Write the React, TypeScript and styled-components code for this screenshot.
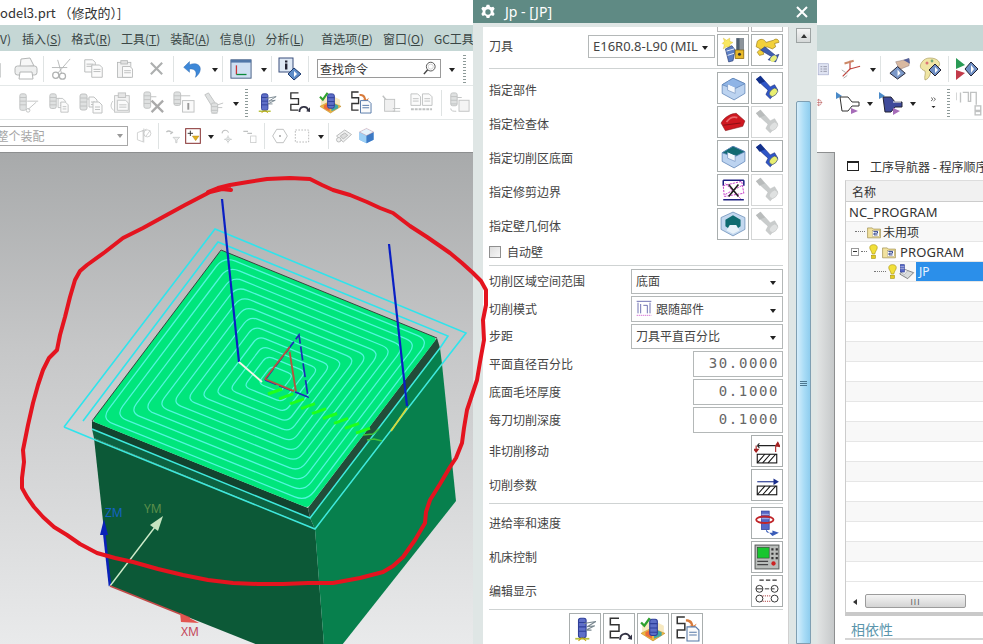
import React from "react";
import styled, { createGlobalStyle } from "styled-components";

const CJK = `"Noto Sans CJK SC", "Noto Sans", sans-serif`;

const Global = createGlobalStyle`
  html, body { margin: 0; padding: 0; background: #fff; overflow: hidden; }
  body { font-family: ${CJK}; }
`;

const Page = styled.div`
  position: relative;
  width: 983px;
  height: 644px;
  overflow: hidden;
  display: flex;
  flex-direction: column;
  background: #fff;
  color: #444;
  font-size: 12px;
`;
const TitleBar = styled.div`
  height: 25px;
  flex: none;
  display: flex;
  align-items: center;
  font-size: 13px;
  color: #333;
  white-space: pre;
`;
const MenuBar = styled.div`
  height: 26px;
  flex: none;
  background: #c5d7d5;
  display: flex;
  align-items: center;
  gap: 10px;
  margin-bottom: 1px;
  color: #3a4645;
  white-space: nowrap;
  overflow: hidden;
`;
const MenuItem = styled.span<{ $ml?: number }>`
  margin-left: ${(p) => p.$ml ?? 0}px;
  flex: none;
`;
const ToolRow = styled.div<{ $h: number; $line: string }>`
  height: ${(p) => p.$h}px;
  flex: none;
  box-sizing: border-box;
  border-bottom: 1px solid ${(p) => p.$line};
  display: flex;
  align-items: center;
  overflow: hidden;
`;
const ToolSlot = styled.span<{ $ml: number; $w: number }>`
  flex: none;
  margin-left: ${(p) => p.$ml}px;
  width: ${(p) => p.$w}px;
  display: flex;
  align-items: center;
  justify-content: center;
`;
const Sep = styled.span`
  width: 1px;
  height: 26px;
  background: #dfe3e3;
`;
const Grip = styled.span`
  width: 3px;
  height: 28px;
  background: repeating-linear-gradient(to bottom, #8d9a98 0 1px, #fff 1px 3px);
`;
const Drop = styled.span`
  width: 0;
  height: 0;
  border-left: 3.5px solid transparent;
  border-right: 3.5px solid transparent;
  border-top: 4px solid #222;
  margin-top: 3px;
`;
const SearchBox = styled.span`
  width: 124px;
  height: 19px;
  box-sizing: border-box;
  border: 1px solid #9a9a9a;
  padding: 0 3px 0 2px;
  display: flex;
  align-items: center;
  justify-content: space-between;
  color: #333;
`;
const AsmSelect = styled.span`
  width: 138px;
  height: 20px;
  box-sizing: border-box;
  border: 1px solid #a8a8a8;
  display: flex;
  align-items: center;
  justify-content: space-between;
  padding: 0 4px 0 0;
  color: #a5a5a5;
  overflow: hidden;
`;
const GrayDrop = styled(Drop)`
  border-top-color: #999;
  margin-top: 0;
`;
const Main = styled.div`
  flex: 1;
  min-height: 0;
  display: flex;
`;
const Viewport = styled.div`
  flex: 1;
  background: linear-gradient(to bottom, #a8aaab 0%, #c6c7c8 40%, #e9eaeb 100%);
  border-top: 1px solid #8d8f90;
  overflow: hidden;
`;
const Drawing = styled.svg`
  display: block;
`;
const Strip = styled.div`
  width: 18px;
  flex: none;
  box-sizing: border-box;
  background: linear-gradient(to right, #e2e4e4, #c6c9ca);
  border-right: 1px solid #8d8f90;
  border-top: 1px solid #8d8f90;
`;
const Nav = styled.div`
  width: 148px;
  flex: none;
  display: flex;
  flex-direction: column;
  background: #fff;
  padding-left: 10px;
  box-sizing: border-box;
`;
const NavHead = styled.div`
  height: 28px;
  flex: none;
  display: flex;
  align-items: center;
  gap: 11px;
  padding-left: 2px;
  white-space: nowrap;
  overflow: hidden;
  color: #333;
`;
const Square = styled.span`
  width: 12px;
  height: 10px;
  flex: none;
  box-sizing: border-box;
  border: 1px solid #222;
  border-top-width: 2px;
`;
const NavBox = styled.div`
  height: 436px;
  flex: none;
  box-sizing: border-box;
  border-left: 1px solid #ccc;
  border-top: 1px solid #ddd;
  border-bottom: 4px solid #c9c9c9;
  display: flex;
  flex-direction: column;
  overflow: hidden;
`;
const NavCol = styled.div`
  height: 21px;
  flex: none;
  box-sizing: border-box;
  background: #f1f1f1;
  border-bottom: 1px solid #ccc;
  padding-left: 6px;
  display: flex;
  align-items: center;
  color: #333;
`;
const TreeRow = styled.div<{ $odd: boolean; $pl: number }>`
  height: 20px;
  flex: none;
  box-sizing: border-box;
  background: ${(p) => (p.$odd ? "#f8f8f8" : "#fff")};
  border-bottom: 1px solid #e6e6e6;
  padding-left: ${(p) => p.$pl}px;
  display: flex;
  align-items: center;
  gap: 2px;
  white-space: nowrap;
  color: #333;
`;
const NavText = styled.span<{ $ml?: number }>`
  margin-left: ${(p) => p.$ml ?? 0}px;
  font-family: "Noto Sans", sans-serif;
  font-size: 13px;
  letter-spacing: 0.1px;
`;
const Selected = styled.span`
  flex: 1;
  align-self: stretch;
  background: #2b8fea;
  color: #e8f3ff;
  margin-left: -1px;
  padding-left: 3px;
  display: flex;
  align-items: center;
  font-size: 12px;
  font-family: "Noto Sans", sans-serif;
`;
const Dots = styled.span<{ $w: number }>`
  width: ${(p) => p.$w}px;
  flex: none;
  border-top: 1px dotted #777;
`;
const Expander = styled.span`
  width: 8px;
  height: 8px;
  flex: none;
  box-sizing: border-box;
  border: 1px solid #999;
  position: relative;
  &::after {
    content: "";
    position: absolute;
    left: 1px;
    right: 1px;
    top: 2px;
    height: 1px;
    background: #333;
  }
`;
const BulbSvg = styled.svg<{ $mr?: number }>`
  display: block;
  flex: none;
  margin-right: ${(p) => p.$mr ?? 0}px;
`;
const HScroll = styled.div`
  flex: 1;
  display: flex;
  align-items: flex-end;
  padding: 0 0 4px 7px;
  gap: 8px;
  background: #fff;
`;
const LeftArrow = styled.span`
  width: 0;
  height: 0;
  margin-bottom: 3px;
  border-top: 3.5px solid transparent;
  border-bottom: 3.5px solid transparent;
  border-right: 4px solid #333;
`;
const HThumb = styled.span`
  width: 101px;
  height: 14px;
  box-sizing: border-box;
  border: 1px solid #9c9c9c;
  border-radius: 2px;
  background: linear-gradient(to bottom, #f4f4f4, #d4d4d4);
  display: flex;
  align-items: center;
  justify-content: center;
  color: #555;
  font-size: 8px;
  letter-spacing: 1px;
`;
const NavFoot = styled.div`
  height: 24px;
  flex: none;
  box-sizing: border-box;
  border-bottom: 2px solid #d5d5d5;
  padding: 4px 0 0 6px;
  color: #5b96ac;
  font-size: 14px;
  display: flex;
  align-items: center;
`;

/* dialog */
const Dialog = styled.div`
  position: absolute;
  left: 473px;
  top: 0;
  width: 344px;
  height: 644px;
  display: flex;
  flex-direction: column;
  background: #e6ebea;
  z-index: 2;
`;
const DialogTitle = styled.div`
  height: 23px;
  flex: none;
  background: #5f8a84;
  color: #fff;
  display: flex;
  align-items: center;
  padding: 0 9px 0 7px;
  gap: 9px;
  font-family: "Noto Sans", sans-serif;
  font-size: 14px;
`;
const CloseX = styled.svg`
  margin-left: auto;
`;
const DialogBody = styled.div`
  flex: 1;
  min-height: 0;
  display: flex;
  padding: 4px 0 0 10px;
  background: #dfe6e5;
`;
const Content = styled.div`
  width: 306px;
  flex: none;
  box-sizing: border-box;
  background: #fff;
  border-right: 1px solid #d0d0d0;
  padding: 0 5px 0 6px;
  display: flex;
  flex-direction: column;
  overflow: hidden;
`;
const ClippedRow = styled.div`
  height: 5px;
  flex: none;
  margin-bottom: 2px;
  display: flex;
  justify-content: flex-end;
  align-items: flex-end;
  gap: 2px;
`;
const Stub = styled.span`
  width: 32px;
  height: 5px;
  box-sizing: border-box;
  border: 1px solid #b9b9b9;
  border-top: none;
`;
const Row = styled.div<{ $h?: number; $mb?: number; $top?: boolean }>`
  height: ${(p) => p.$h ?? 32}px;
  margin-bottom: ${(p) => p.$mb ?? 2}px;
  flex: none;
  display: flex;
  align-items: ${(p) => (p.$top ? "flex-start" : "center")};
  gap: 2px;
  white-space: nowrap;
`;
const Label = styled.span<{ $pt?: number }>`
  flex: 1;
  color: #444;
  padding-top: ${(p) => p.$pt ?? 0}px;
  padding-bottom: ${(p) => (p.$pt ? 0 : 2)}px;
`;
const IconBtn = styled.span<{ $dim?: boolean }>`
  width: 32px;
  height: 32px;
  flex: none;
  box-sizing: border-box;
  border: 1px solid ${(p) => (p.$dim ? "#d4d6d6" : "#a9aeae")};
  display: flex;
  align-items: center;
  justify-content: center;
  background: #fff;
`;
const Combo = styled.span<{ $w: number; $latin?: boolean; $h?: number }>`
  width: ${(p) => p.$w}px;
  height: ${(p) => (p.$h ? `${p.$h}px` : "100%")};
  margin-top: ${(p) => (p.$h ? "1px" : "0")};
  flex: none;
  box-sizing: border-box;
  border: 1px solid #b4b8b8;
  display: flex;
  align-items: center;
  justify-content: space-between;
  gap: 3px;
  padding: 0 6px 0 4px;
  color: #444;
  font-family: ${(p) => (p.$latin ? `"Noto Sans", sans-serif` : CJK)};
  font-size: ${(p) => (p.$latin ? 13 : 12)}px;
`;
const ComboText = styled.span`
  display: flex;
  align-items: center;
  gap: 4px;
  overflow: hidden;
  padding-bottom: 2px;
`;
const NumInput = styled.span`
  width: 90px;
  height: 100%;
  flex: none;
  box-sizing: border-box;
  border: 1px solid #b4b8b8;
  display: flex;
  align-items: center;
  justify-content: flex-end;
  padding: 0 3px 2px 0;
  font-family: "DejaVu Sans Mono", monospace;
  font-size: 14px;
  letter-spacing: 1.6px;
  color: #666;
`;
const Divider = styled.div<{ $mb: number }>`
  height: 1px;
  flex: none;
  background: #cfd3d3;
  margin-bottom: ${(p) => p.$mb}px;
`;
const CheckBox = styled.span`
  width: 12px;
  height: 12px;
  flex: none;
  box-sizing: border-box;
  border: 1px solid #8f8f8f;
  background: linear-gradient(135deg, #ddd, #f6f6f6);
  margin-right: 4px;
`;
const CenterRow = styled.div`
  display: flex;
  gap: 2px;
  padding-left: 80px;
`;
const VScroll = styled.div`
  flex: 1;
  display: flex;
  flex-direction: column;
  align-items: center;
  padding: 1px 0 0 1px;
  width: 27px;
`;
const ScrollBtn = styled.span`
  width: 15px;
  height: 15px;
  flex: none;
  box-sizing: border-box;
  border: 1px solid #9da3a3;
  background: linear-gradient(#f5f5f5, #d5d8d8);
  display: flex;
  align-items: center;
  justify-content: center;
  margin-bottom: 58px;
  &::before {
    content: "";
    border-left: 3px solid transparent;
    border-right: 3px solid transparent;
    border-bottom: 4px solid #333;
  }
`;
const ScrollThumb = styled.span`
  width: 15px;
  flex: 1;
  box-sizing: border-box;
  border: 1px solid #7f9fb2;
  border-radius: 2px 2px 0 0;
  background: linear-gradient(to right, #d6eefb, #a9dcf6 55%, #8fcdee);
  position: relative;
  &::after {
    content: "";
    position: absolute;
    top: 279px;
    left: 3px;
    width: 7px;
    height: 6px;
    background: repeating-linear-gradient(to bottom, #4d7790 0 1px, transparent 1px 2px);
  }
`;
const Annotation = styled.svg`
  position: absolute;
  left: 0;
  top: 0;
  z-index: 3;
  pointer-events: none;
`;

/* ----- icons (viewBox 24) ----- */
const C = "#c0c2c2";
const D = "#dfe1e1";
const cyl = (x: number, y: number, h: number, f = D, s = C) => (
  <g>
    <rect x={x} y={y} width="7" height={h} rx="2" fill={f} stroke={s} />
    <path d={`M${x} ${y + 4}h7M${x} ${y + 8}h7M${x} ${y + 12}h7`} stroke={s} />
  </g>
);
const doc = (x: number, y: number, w = 9, h = 11, s = C) => (
  <g>
    <path d={`M${x} ${y}h${w - 3}l3 3v${h - 3}h-${w}z`} fill="#fbfbfb" stroke={s} />
    <path d={`M${x + 2} ${y + 5}h${w - 4}M${x + 2} ${y + 7.5}h${w - 4}`} stroke={s} />
  </g>
);
const fanLines = (s: string) => <path d="M11 7 22 5 14 10 21 9 13 13 18 13" fill="none" stroke={s} />;
const flash = (body: string, dark: string, lens: string, stroke: string) => (
  <g>
    <path d="M2 4 6 1 15 11 19 9 22 14 15 22 11 18 13 14z" fill={body} stroke={stroke} strokeWidth=".6" />
    <path d="M2 4 6 1 10 6 5 8z" fill={dark} />
    <ellipse cx="18" cy="16" rx="3" ry="4.4" transform="rotate(45 18 16)" fill={lens} stroke={stroke} strokeWidth=".5" />
  </g>
);
const block = (top: string, side: string) => (
  <g stroke="#5f84b6" strokeWidth=".7">
    <path d="M2 9 12 3 23 8 23 17 13 23 2 17z" fill={side} />
    <path d="M2 9 12 3 23 8 13 13z" fill={top} />
    <path d="M7 8 14 11 14 17 7 14z" fill="#f4f8fd" stroke="#7c9ac6" />
    <path d="M7 7 14 10" stroke={top} strokeWidth="3" />
  </g>
);

const icons: Record<string, React.ReactNode> = {
  doc: <g>{doc(4, 3, 16, 18)}<rect x="0" y="8" width="2" height="10" fill={C} /></g>,
  printer: (
    <g stroke="#b4b6b6" fill="#eeefef">
      <path d="M7 2 16 1 20 9 6 10z" fill="#f7f7f7" />
      <rect x="1" y="9" width="22" height="9" rx="2.5" />
      <path d="M6 15h12l1 7H5z" fill="#fff" />
    </g>
  ),
  scissors: (
    <g fill="none" stroke="#b0b2b2" strokeWidth="1.3">
      <circle cx="6" cy="19" r="3.2" />
      <circle cx="13" cy="20" r="3.2" />
      <path d="M8 17 21 2M12 17 8 3M2 11 18 11" strokeWidth=".9" />
    </g>
  ),
  copy: <g>{doc(2, 2, 12, 14, "#b4b6b6")}{doc(10, 8, 12, 14, "#b4b6b6")}</g>,
  paste: (
    <g stroke="#b4b6b6">
      <rect x="3" y="4" width="16" height="18" fill="#f3f3f3" />
      <rect x="7" y="2" width="8" height="4" fill="#e2e2e2" />
      {doc(9, 9, 12, 13, "#b4b6b6")}
    </g>
  ),
  del: <path d="M4 4 20 20M20 4 4 20" stroke="#adafaf" strokeWidth="3" />,
  undo: (
    <path d="M2 10 9 3 9 7C15 4 22 6 22 12 22 16 19 20 16 22 18 17 17 11 9 12L9 16z" fill="#3d88d8" stroke="#2b67ad" strokeWidth=".5" />
  ),
  csys: (
    <g>
      <rect x="1" y="2" width="22" height="20" fill="#cfe0f2" stroke="#425a80" />
      <rect x="1" y="2" width="22" height="3" fill="#5177a8" />
      <path d="M7 8V18" stroke="#c33" strokeWidth="1.4" />
      <path d="M7 18H18" stroke="#0a8a3a" strokeWidth="1.4" />
    </g>
  ),
  infoDia: (
    <g>
      <rect x="1" y="1" width="14" height="14" fill="#dfe9f5" stroke="#3a4f7d" />
      <rect x="7" y="3.5" width="2.4" height="2" fill="#223" />
      <rect x="7" y="6.5" width="2.4" height="6" fill="#223" />
      <path d="M16 11 23 17 16 23 10 17z" fill="#5d8cc8" stroke="#1e3a6e" />
      <path d="M16 14 19 17 16 20z" fill="#fff" />
    </g>
  ),
  glass: (
    <g fill="none" stroke="#444">
      <circle cx="14" cy="9" r="7" strokeWidth="1.4" />
      <circle cx="14" cy="9" r="4" stroke="#bbb" />
      <path d="M9 14 3 21" strokeWidth="2.4" />
    </g>
  ),
  gLeft: <g>{cyl(-2, 4, 14)}<path d="M8 14c4-1 4 5 0 5" fill="none" stroke={C} /></g>,
  sScissors: <g>{cyl(2, 2, 18)}<path d="M10 10h12M11 19 20 11" stroke={C} /><circle cx="11" cy="20" r="2" fill="none" stroke={C} /></g>,
  sCopy: <g>{cyl(2, 2, 16)}<path d="M9 7h4" stroke={C} />{doc(11, 7, 8, 10)}{doc(14, 11, 8, 11)}</g>,
  sPaste: <g>{cyl(1, 3, 16)}<path d="M8 8h5" stroke={C} />{doc(10, 6, 8, 10)}{doc(14, 11, 9, 11)}</g>,
  cCopy: <g><rect x="5" y="4" width="16" height="18" fill="#f3f3f3" stroke={C} /><rect x="9" y="1" width="8" height="5" fill="#e5e5e5" stroke={C} />{doc(8, 9, 12, 11)}<path d="M3 10C0 14 1 18 4 20" stroke={C} fill="none" /></g>,
  sDel: <g>{cyl(2, 1, 17)}<path d="M9 6h6" stroke={C} /><path d="M10 10 22 22M22 10 10 22" stroke="#aaa" strokeWidth="2.4" /></g>,
  sInfo: <g>{cyl(2, 1, 14)}<path d="M9 5h10" stroke={C} /><rect x="11" y="10" width="12" height="12" fill="#fafafa" stroke={C} /><rect x="16" y="12.5" width="2" height="7" fill="#999" /></g>,
  sSlant: <g><path d="M2 3 6 1 14 13 10 16z" fill={D} stroke={C} />{cyl(9, 12, 11)}<path d="M16 14 22 12M16 17 21 17" stroke={C} /></g>,
  gen: <g>{cyl(6, 2, 18, "#5f6fc8", "#2f3f99")}{fanLines("#7a8890")}<path d="M3 21h13" stroke="#b7c23c" strokeWidth="1.6" /><path d="M9 20 6 23M10 20 13 23" stroke="#c4a010" /></g>,
  replay: <g fill="none"><path d="M12 2H4V8H12V14H4V20H12" stroke="#333" strokeWidth="1.4" /><path d="M13 22C13 15 21 15 22 20" stroke="#334" strokeWidth="1.8" /><path d="M20 21 24 17 24 22z" fill="#334" /></g>,
  verify: (
    <g>
      <path d="M1 16 11 11 23 16 12 23z" fill="#f0b43c" stroke="#b37b16" strokeWidth=".5" />
      <path d="M2 8 12 4 22 9V17L12 22 2 17z" fill="#e7c04a" opacity=".35" />
      <path d="M5 15 11 12V21L5 18z" fill="#ec6d3a" />
      <path d="M13 12 20 15V18L13 21z" fill="#41a7a2" />
      {cyl(9, 3, 15, "#5d6ec6", "#2f3f99")}
      <path d="M1 6 4 9 9 2" fill="none" stroke="#2fa12f" strokeWidth="2.2" />
    </g>
  ),
  list: <g><path d="M10 1H3V7H10V13H3V20H10" fill="none" stroke="#333" strokeWidth="1.4" /><path d="M11 3C15 3 17 4 18 9L21 7 18 12 14 8 16 9C15 6 13 5 11 5z" fill="#d87a3a" />{doc(12, 10, 11, 13, "#5779a8")}</g>,
  gCheck: <g><path d="M3 4 8 10 8 18" fill="none" stroke={C} strokeWidth="1.6" /><rect x="5" y="8" width="11" height="13" fill="#f0f0f0" stroke={C} /><path d="M14 18h8M14 21h8" stroke={C} /></g>,
  gCompare: <g>{doc(1, 3, 10, 12)}{doc(13, 3, 10, 12)}<path d="M1 19h22" stroke={C} strokeWidth="2" strokeDasharray="3 1" /></g>,
  gMach: <g>{cyl(3, 1, 14)}<path d="M10 6h5" stroke={C} /><rect x="12" y="9" width="11" height="12" fill="#f4f4f4" stroke={C} /><path d="M3 18C3 21 6 21 9 21" fill="none" stroke={C} /></g>,
  gAsm: <g fill="none" stroke={C}><path d="M2 8 10 5 10 21 2 18zM11 2V22M8 6 15 3" /><circle cx="16" cy="9" r="5" /><path d="M14 13 20 5" /></g>,
  gFilter: <g><path d="M2 6C7 2 8 6 11 7M8 9l4-3" stroke={C} fill="none" strokeWidth="2" /><path d="M12 14h10l-4 4v4h-2v-4z" fill="#eee" stroke={C} /></g>,
  redBox: <g><rect x="1" y="1" width="22" height="22" fill="#fff" stroke="#8c3a3a" strokeWidth="1.6" /><path d="M8 4V12M4 8H12" stroke="#222" strokeWidth="1.3" /><path d="M11 12h10l-5 7z" fill="#e0b020" stroke="#a87c10" strokeWidth=".6" /></g>,
  gRot: <g fill="none" stroke={C}><path d="M3 8C4 2 11 2 13 7" strokeWidth="1.6" /><path d="M12 11V23M6 17H18" /><path d="M12 13 16 17 12 21 8 17z" /></g>,
  gParts: <g fill="none" stroke={C} strokeWidth="2"><path d="M2 5h7M8 8h7" /><rect x="13" y="12" width="8" height="10" strokeWidth="1" /></g>,
  hex: <g><path d="M7 2H17L23 12 17 22H7L1 12z" fill="none" stroke="#a2a4a4" /><circle cx="12" cy="12" r="1.4" fill="#999" /></g>,
  dash: <rect x="2" y="3" width="20" height="18" fill="none" stroke="#9a9c9c" strokeDasharray="2.5 2" />,
  gCube: <g fill="#f0f0f0" stroke="#a8aaaa"><path d="M2 12 13 4 22 10 11 20z" /><path d="M7 12 13 8 17 11 11 16z" fill="#ddd" /><circle cx="5" cy="17" r="3" /></g>,
  blueCube: <g><path d="M2 7 12 2 22 7V18L12 23 2 18z" fill="#6fb0ea" /><path d="M2 7 12 12V23L2 18z" fill="#9dd0f5" /><path d="M12 12 22 7V18L12 23z" fill="#3d79c4" /><path d="M2 7 12 2 22 7 12 12z" fill="#e7f3fb" stroke="#d88" strokeWidth=".5" /></g>,
  docBlue: <g><rect x="2" y="3" width="18" height="19" fill="#dfe3f2" stroke="#9fa6c8" /><path d="M6 8h3M11 8h6M6 12h3M11 12h6M6 16h3M11 16h6" stroke="#667" /></g>,
  axes: <g fill="none"><path d="M12 12 12 3M12 12 23 9M12 12 4 20" stroke="#c0443c" strokeWidth="1.3" /><path d="M6 6 16 3" stroke="#c86" strokeWidth="2" /><path d="M3 13 9 17M5 22 9 19" stroke="#aaa" /></g>,
  hand: <g><path d="M8 5 22 2 22 9 12 13z" fill="#d9b9a0" stroke="#877" strokeWidth=".5" /><path d="M16 3 22 1 23 7z" fill="#55609a" /><path d="M10 10 18 17 10 23 2 17z" fill="#7b98c8" stroke="#223" /><path d="M10 13 13 17 10 20z" fill="#fff" /></g>,
  palette: <g><path d="M12 1C20 1 23 6 21 9L13 13C12 20 10 22 7 23 6 19 8 17 7 14 2 12 1 9 4 5 6 2 9 1 12 1z" fill="#f0e6a5" stroke="#a09050" strokeWidth=".6" /><circle cx="9" cy="6" r="1.5" fill="#d77" /><circle cx="14" cy="4" r="1.4" fill="#7a7" /><path d="M17 7 23 13 17 19 11 13z" fill="#6f8fc4" stroke="#223" /><path d="M17 10 20 13 17 16z" fill="#fff" /></g>,
  start: <g><path d="M1 1 10 8 1 12z" fill="#2a9a55" /><path d="M1 13 10 16 1 23z" fill="#c23a4a" /><path d="M16 5 23 12 16 19 10 12z" fill="#6f8fc4" stroke="#223" /><path d="M16 8 19 12 16 16z" fill="#fff" /></g>,
  target: <g fill="none" stroke="#a33"><circle cx="8" cy="12" r="6" /><path d="M0 12H16M8 4V20" /></g>,
  cone: <g><path d="M0 1 6 5 0 8z" fill="#4a8ac8" /><path d="M4 6H12L16 11H23V15H16L12 20H6z" fill="#fff" stroke="#333" /><path d="M15 17 22 20 15 23z" fill="#a66cb8" /></g>,
  coneBlue: <g><path d="M0 1 6 5 0 8z" fill="#4a8ac8" /><path d="M4 6H12L16 11H23V16H16L12 21H6z" fill="#3f4a9a" stroke="#223" /><path d="M14 11H22" stroke="#fff" /><path d="M14 17 21 20 14 24z" fill="#a66cb8" /></g>,
  more: <g fill="none" stroke="#222"><path d="M2 1 6 4.5 2 8M7 1 11 4.5 7 8" strokeWidth="1.3" /><path d="M3 18h8l-4 4z" fill="#222" stroke="none" /></g>,
  gSteps: <g fill="none" stroke={C} strokeWidth="1.2"><path d="M0 3V10M4 3V12M6 3H11V11H13V3H18V14" /><rect x="17" y="15" width="5" height="4" /><rect x="17" y="20" width="5" height="3" /></g>,
  newTool: (
    <g>
      <path d="M2 6 4 4 3 1 6 3 9 1 9 4 12 5 9 7 10 10 6 9 3 11 4 7z" fill="#f8e860" stroke="#c9a820" strokeWidth=".3" />
      <path d="M5 11 11 8 14 12 12 22 8 23z" fill="#5c7fc4" stroke="#24386f" strokeWidth=".6" />
      <path d="M6 13 13 11M7 17 13 15" stroke="#fff" strokeWidth=".8" />
      <rect x="15" y="1" width="7" height="16" fill="#4f5f70" />
      <path d="M18 1h4v16h-4z" fill="#8d949b" />
      <rect x="14" y="12" width="8" height="8" fill="#e8b92a" stroke="#7b5c10" strokeWidth=".6" />
      <circle cx="18" cy="16" r="1.4" fill="#333" />
    </g>
  ),
  wrench: (
    <g>
      <path d="M3 4C6 1 10 2 11 5L18 3C20 1 23 2 23 5L19 6 20 9 17 11 12 9 8 12 9 16 5 17 3 14 6 11 2 9z" fill="#f2d03a" stroke="#98781a" strokeWidth=".6" />
      <path d="M6 12 10 9 20 17 23 16 20 23 13 21 16 18z" fill="#3f5eb0" stroke="#1b2e70" strokeWidth=".5" />
      <ellipse cx="18" cy="20" rx="2.5" ry="3.4" transform="rotate(45 18 20)" fill="#e8ee7a" />
    </g>
  ),
  partBlock: block("#8fb4e6", "#bcd3f0"),
  flashOn: flash("#2f56c8", "#12308a", "#e8ee70", "#1a2f80"),
  flashOff: flash("#c9cccc", "#b9bcbc", "#dfe1e1", "#c0c2c2"),
  redBody: (
    <g>
      <path d="M1 13C4 7 11 4 15 4L23 11 21 16 5 20z" fill="#cf1820" stroke="#7d1216" strokeWidth=".5" />
      <path d="M6 12C9 8 13 7 16 8" fill="none" stroke="#eb6a6e" strokeWidth="1.6" />
      <path d="M3 15 19 13" stroke="#8c1014" strokeWidth="1" />
    </g>
  ),
  floorBlock: block("#116a72", "#bcd3f0"),
  trim: (
    <g fill="none">
      <path d="M3 3H22M3 21H22M3 3V8M22 3V8" stroke="#1c1f80" strokeWidth="1.4" />
      <path d="M3 8 20 4 22 15 4 18zM5 6 19 20M20 8 5 16" stroke="#c33ac6" strokeWidth=".9" strokeDasharray="2 1" />
      <path d="M8 7 17 18M17 7 8 18" stroke="#222" strokeWidth="1.5" />
    </g>
  ),
  wall: (
    <g>
      <path d="M12 1 23 6V17L12 23 1 17V6z" fill="#c3d8ef" stroke="#6d8fb8" strokeWidth=".7" />
      <path d="M12 4 19 8V14L12 19 5 14V8z" fill="#0f6b70" />
      <path d="M9 13 15 13 18 18 12 21 6 18z" fill="#e8f2fa" />
    </g>
  ),
  nonCut: (
    <g>
      <path d="M3 7H20M3 7 5 5M3 7 5 9" fill="none" stroke="#222" strokeWidth="1" />
      <path d="M2 7V13M20 7V13M2 13 0 10.5H4zM20 7 22 4 24 8z" fill="#a32020" stroke="#a32020" />
      <rect x="3" y="15" width="18" height="8" fill="#fff" stroke="#111" />
      <path d="M3 23 10 15M8 23 15 15M13 23 20 15" stroke="#111" />
    </g>
  ),
  cutParam: (
    <g>
      <path d="M3 9H20" stroke="#1b2e8c" strokeWidth="1" />
      <path d="M18 6 23 9 18 12z" fill="#1b2e8c" />
      <rect x="3" y="13" width="18" height="8" fill="#fff" stroke="#111" />
      <path d="M3 21 10 13M8 21 15 13M13 21 20 13" stroke="#111" />
    </g>
  ),
  feed: (
    <g>
      <rect x="7" y="1" width="7" height="17" fill="#5668c8" stroke="#2f3f99" strokeWidth=".7" />
      <path d="M7 4h7M7 8h7M7 12h7" stroke="#b8c2ee" strokeWidth=".8" />
      <ellipse cx="10" cy="9" rx="8" ry="3" fill="none" stroke="#c02428" strokeWidth="1.7" />
      <path d="M11 18C11 22 14 21 17 21V19L23 21 17 24z" fill="#3a5cb8" />
    </g>
  ),
  machine: (
    <g>
      <rect x="1" y="1" width="22" height="22" fill="#b9bdba" stroke="#5c605e" />
      <rect x="3" y="3" width="11" height="10" fill="#17c62f" stroke="#333" strokeWidth=".5" />
      <path d="M16 4h2v2h-2zM20 4h2v2h-2zM16 8h2v2h-2zM20 8h2v2h-2zM16 12h2v2h-2zM20 12h2v2h-2z" fill="#333" />
      <path d="M3 16H13M3 19H13" stroke="#444" />
      <circle cx="18" cy="18" r="2" fill="#c22" />
    </g>
  ),
  editDisp: (
    <g fill="none" stroke="#333" strokeWidth=".9">
      <path d="M5 2H9M11 2H15M17 2H21" strokeWidth="1.1" />
      <circle cx="5" cy="10" r="3.2" /><circle cx="19" cy="10" r="3.2" />
      <path d="M2 10H8M10 10H14M16 10H19" />
      <circle cx="5" cy="19" r="3.2" /><circle cx="19" cy="19" r="3.2" />
      <path d="M8 16.5H16M8 21.5H16" stroke="#a33" strokeDasharray="1 1" />
    </g>
  ),
  folder: (
    <g>
      <path d="M1 5H9L11 7H23V22H1z" fill="#f2e2a0" stroke="#8e7a30" />
      <rect x="9" y="9" width="12" height="11" fill="#fff" stroke="#8e7a30" strokeWidth=".6" />
      <path d="M11 11H18V14H12V17H18" fill="none" stroke="#1a2f80" strokeWidth="1.5" />
    </g>
  ),
  opIcon: (
    <g>
      <path d="M8 8 22 13 13 22 1 15z" fill="#d9dcdc" stroke="#555" />
      <path d="M8 8 13 10 8 16 4 13z" fill="#f5f5f5" stroke="#777" strokeWidth=".6" />
      <rect x="2" y="1" width="6" height="11" fill="#5668c8" stroke="#2f3f99" />
      <path d="M2 4H8M2 7H8" stroke="#ccd" />
    </g>
  ),
  follow: (
    <g fill="none" stroke="#2a2f8e">
      <path d="M1 2H23M3 4V20M7 6V20M11 8H17V20M21 4V20" />
      <path d="M1 23H23" stroke="#c33ac6" strokeDasharray="2 1" />
    </g>
  ),
};

const Icon = ({ n, s = 26 }: { n: string; s?: number }) => (
  <svg width={s} height={s} viewBox="0 0 24 24" style={{ display: "block", flex: "none", overflow: "hidden" }}>
    {icons[n]}
  </svg>
);
const Bulb = ({ mr }: { mr?: number }) => (
  <BulbSvg $mr={mr} width="9" height="15" viewBox="0 0 14 24">
    <path d="M7 1C3 1 1 3 1 6 1 9 4 11 5 16H9C10 11 13 9 13 6 13 3 11 1 7 1z" fill="#f2e03a" stroke="#a89410" />
    <rect x="4" y="18" width="6" height="5" fill="#e6cc20" stroke="#a89410" />
  </BulbSvg>
);

type T = { x: number; w: number; n?: string; el?: React.ReactNode };

const ToolItems = ({ items }: { items: T[] }) => {
  let at = 0;
  return (
    <>
      {items.map((t, i) => {
        const ml = t.x - at;
        at = t.x + t.w;
        return (
          <ToolSlot key={i} $ml={ml} $w={t.w}>
            {t.el ?? <Icon n={t.n!} s={t.w} />}
          </ToolSlot>
        );
      })}
    </>
  );
};
const sep = (x: number): T => ({ x, w: 1, el: <Sep /> });
const drop = (x: number): T => ({ x, w: 7, el: <Drop /> });
const grip = (x: number): T => ({ x, w: 3, el: <Grip /> });

const row1: T[] = [
  { x: -18, w: 22, n: "doc" },
  { x: 14, w: 24, n: "printer" },
  sep(43),
  { x: 50, w: 23, n: "scissors" },
  { x: 83, w: 21, n: "copy" },
  { x: 115, w: 20, n: "paste" },
  { x: 148, w: 17, n: "del" },
  sep(173),
  { x: 182, w: 20, n: "undo" },
  drop(211),
  sep(222),
  { x: 230, w: 22, n: "csys" },
  drop(260),
  sep(271),
  { x: 278, w: 24, n: "infoDia" },
  sep(308),
  {
    x: 317,
    w: 124,
    el: (
      <SearchBox>
        查找命令
        <Icon n="glass" s={15} />
      </SearchBox>
    ),
  },
  drop(448),
  grip(463),
  { x: 817, w: 14, n: "docBlue" },
  { x: 839, w: 22, n: "axes" },
  drop(869),
  sep(880),
  { x: 888, w: 23, n: "hand" },
  { x: 918, w: 24, n: "palette" },
  sep(948),
  { x: 955, w: 24, n: "start" },
];
const row2: T[] = [
  { x: -14, w: 22, n: "gLeft" },
  { x: 18, w: 22, n: "sScissors" },
  { x: 48, w: 22, n: "sCopy" },
  { x: 79, w: 24, n: "sPaste" },
  { x: 110, w: 22, n: "cCopy" },
  { x: 142, w: 23, n: "sDel" },
  { x: 172, w: 23, n: "sInfo" },
  { x: 203, w: 22, n: "sSlant" },
  drop(232),
  grip(245),
  { x: 256, w: 22, n: "gen" },
  { x: 287, w: 23, n: "replay" },
  { x: 319, w: 23, n: "verify" },
  { x: 349, w: 23, n: "list" },
  { x: 380, w: 22, n: "gCheck" },
  { x: 410, w: 23, n: "gCompare" },
  sep(441),
  { x: 448, w: 22, n: "gMach" },
  { x: 815, w: 11, n: "target" },
  { x: 836, w: 24, n: "cone" },
  drop(866),
  { x: 879, w: 24, n: "coneBlue" },
  drop(909),
  { x: 930, w: 12, n: "more" },
  grip(947),
  { x: 956, w: 27, n: "gSteps" },
];
const row3: T[] = [
  {
    x: -10,
    w: 138,
    el: (
      <AsmSelect>
        <span>&nbsp;&nbsp;整个装配</span>
        <GrayDrop />
      </AsmSelect>
    ),
  },
  { x: 136, w: 17, n: "gAsm" },
  sep(158),
  { x: 165, w: 16, n: "gFilter" },
  { x: 185, w: 16, n: "redBox" },
  drop(207),
  { x: 220, w: 16, n: "gRot" },
  { x: 242, w: 16, n: "gParts" },
  sep(264),
  { x: 272, w: 16, n: "hex" },
  { x: 294, w: 16, n: "dash" },
  drop(317),
  sep(328),
  { x: 335, w: 18, n: "gCube" },
  { x: 358, w: 17, n: "blueCube" },
];

/* ----- part drawing ----- */
const FACE: number[][] = [
  [92, 420],
  [221, 249],
  [437, 337],
  [308, 507],
];
const rounded = (pts: number[][], r: number) => {
  const n = pts.length;
  let d = "";
  pts.forEach((p, i) => {
    const a = pts[(i + n - 1) % n];
    const b = pts[(i + 1) % n];
    const la = Math.hypot(a[0] - p[0], a[1] - p[1]);
    const lb = Math.hypot(b[0] - p[0], b[1] - p[1]);
    const s = [p[0] + ((a[0] - p[0]) * r) / la, p[1] + ((a[1] - p[1]) * r) / la];
    const e = [p[0] + ((b[0] - p[0]) * r) / lb, p[1] + ((b[1] - p[1]) * r) / lb];
    d += `${i ? "L" : "M"}${s[0].toFixed(1)} ${s[1].toFixed(1)}Q${p[0]} ${p[1]} ${e[0].toFixed(1)} ${e[1].toFixed(1)}`;
  });
  return d + "Z";
};
const rings = Array.from({ length: 12 }, (_, i) => {
  const s = 0.95 - i * 0.077;
  const cx = 265 + (1 - s) * 12;
  const pts = FACE.map((p) => [cx + (p[0] - 265) * s, 378 + (p[1] - 378) * s]);
  return rounded(pts, 5 + 8 * s);
});
const hatch = Array.from({ length: 9 }, (_, i) => {
  const x = 268 + i * 11;
  const y = 390 + i * 4.9;
  return `M${x} ${y + 3}L${x + 14} ${y - 2}`;
}).join("");

const RED =
  "M208 192 L218 188 L230 185 L248 182 L267 179 L290 178 L310 179 L322 185 L333 190 L350 195 L367 202 L380 208 L393 213 L410 226 L427 237 L440 246 L450 253 L462 263 L473 273 L481 281 L486 290 L486 305 L483 320 L484 340 L480 362 L477 380 L471 398 L467 410 L464 428 L462 443 L456 458 L450 467 L440 484 L430 500 L426 512 L425 523 L415 540 L403 557 L393 566 L383 572 L360 578 L333 583 L308 583 L283 584 L258 584 L233 583 L208 580 L183 575 L158 569 L133 562 L115 558 L97 553 L80 544 L67 535 L54 527 L43 517 L34 507 L27 497 L22 488 L22 478 L24 462 L23 450 L28 425 L33 403 L38 385 L43 370 L49 358 L57 350 L60 335 L65 317 L70 297 L75 280 L80 271 L87 265 L105 252 L123 238 L143 228 L163 217 L185 205 L210 192 L222 189 L231 190";

const Part = () => (
  <Drawing width="817" height="492" viewBox="0 152 817 492">
    <path d="M94 437 315 528 324 644 258 644 110 585Z" fill="#0c5937" />
    <path d="M315 528 442 363 456 500 342 644 324 644Z" fill="#07804d" />
    <path d="M92 420 308 507 310 517 92 428Z" fill="#12432f" />
    <path d="M92 428 310 517 315 528 94 437Z" fill="#0d6242" />
    <path d="M308 507 437 337 440 347 310 517Z" fill="#224c39" />
    <path d="M310 517 440 347 442 363 315 528Z" fill="#07804d" />
    <path d="M64 426 215 228 466 332 442 363 M64 426 93 438" fill="none" stroke="#2fe4ec" strokeWidth="1.6" />
    <path d="M83 420 218 241 448 335 440 347" fill="none" stroke="#2fe4ec" strokeWidth="1.6" />
    <path d="M92 428 310 517 440 347" fill="none" stroke="#3fe8dc" strokeWidth="1.5" />
    <path d="M93 438 315 528 442 363" fill="none" stroke="#3fe8dc" strokeWidth="1.5" />
    <path d={rounded(FACE, 4)} fill="#00e67c" />
    <path d="M92 420 221 249 437 337" fill="none" stroke="#333" strokeWidth=".9" />
    {rings.map((d, i) => (
      <path key={i} d={d} fill="none" stroke="#52f5dc" strokeWidth="1.25" />
    ))}
    <path d={hatch} stroke="#1fff1c" strokeWidth="3" fill="none" />
    <path d="M363 434 373 433 379 428 M367 439 374 438 382 440" stroke="#3ec43a" strokeWidth="1.6" fill="none" />
    <path d="M222 198 239 361" stroke="#0a1fc4" strokeWidth="2.2" />
    <path d="M389 243 407 405" stroke="#0a1fc4" strokeWidth="2.2" />
    <path d="M239 361 262 381" stroke="#f4f6e8" strokeWidth="1.8" />
    <path d="M407 407 391 430" stroke="#d8d83a" strokeWidth="1.8" />
    <path d="M265 379 299 334 308 396 265 379" fill="none" stroke="#1b2db8" strokeWidth="1.7" strokeDasharray="14 3" />
    <path d="M265 378 289 347 296 391 265 378" fill="none" stroke="#b4553e" strokeWidth="1.8" strokeDasharray="40 3" />
    <path d="M110 585 104 530" stroke="#0a22b8" strokeWidth="2.6" />
    <path d="M104 518 108 534 100 534Z" fill="#0a22b8" />
    <path d="M110 585 158 522" stroke="#cfeccb" strokeWidth="1.4" />
    <path d="M163 515 158 530 150 524Z" fill="#c6e4c0" />
    <path d="M110 585 190 617" stroke="#c14a48" strokeWidth="1.8" />
    <path d="M199 622 180 612 181 621Z" fill="#e25550" />
    <text x="105" y="516" fontSize="12" fill="#1463c4" fontFamily="Noto Sans, sans-serif">ZM</text>
    <text x="144" y="512" fontSize="12" fill="#5c8f4a" fontFamily="Noto Sans, sans-serif">YM</text>
    <text x="181" y="635" fontSize="12" fill="#c4475a" fontFamily="Noto Sans, sans-serif">XM</text>
  </Drawing>
);

const btnRows: [string, string, boolean][] = [
  ["指定部件", "partBlock", false],
  ["指定检查体", "redBody", true],
  ["指定切削区底面", "floorBlock", false],
  ["指定修剪边界", "trim", true],
  ["指定壁几何体", "wall", true],
];
const menus: [string, string, number][] = [
  ["格式", "R", 0],
  ["工具", "T", 0],
  ["装配", "A", 0],
  ["信息", "I", 0],
  ["分析", "L", 0],
  ["首选项", "P", 7],
  ["窗口", "O", 0],
];

export default function App() {
  return (
    <Page>
      <Global />
      <TitleBar>odel3.prt （修改的）]</TitleBar>
      <MenuBar>
        <MenuItem>V)</MenuItem>
        <MenuItem $ml={1}>插入(<u>S</u>)</MenuItem>
        {menus.map(([t, k, ml]) => (
          <MenuItem key={t} $ml={ml}>
            {t}(<u>{k}</u>)
          </MenuItem>
        ))}
        <MenuItem>GC工具</MenuItem>
      </MenuBar>
      <ToolRow $h={34} $line="#e4e8e8"><ToolItems items={row1} /></ToolRow>
      <ToolRow $h={34} $line="#e4e8e8"><ToolItems items={row2} /></ToolRow>
      <ToolRow $h={32} $line="#fff"><ToolItems items={row3} /></ToolRow>
      <Main>
        <Viewport><Part /></Viewport>
        <Strip />
        <Nav>
          <NavHead>
            <Square />
            工序导航器 - 程序顺序视图
          </NavHead>
          <NavBox>
            <NavCol>名称</NavCol>
            <TreeRow $odd={false} $pl={3}><NavText>NC_PROGRAM</NavText></TreeRow>
            <TreeRow $odd $pl={9}>
              <Dots $w={10} />
              <Icon n="folder" s={14} />
              <span>未用项</span>
            </TreeRow>
            <TreeRow $odd={false} $pl={5}>
              <Expander />
              <Dots $w={6} />
              <Bulb mr={2} />
              <Icon n="folder" s={14} />
              <NavText $ml={2}>PROGRAM</NavText>
            </TreeRow>
            <TreeRow $odd $pl={28}>
              <Dots $w={12} />
              <Bulb />
              <Icon n="opIcon" s={16} />
              <Selected>JP</Selected>
            </TreeRow>
            {Array.from({ length: 15 }, (_, i) => (
              <TreeRow key={i} $odd={i % 2 === 1} $pl={0} />
            ))}
            <HScroll>
              <LeftArrow />
              <HThumb>III</HThumb>
            </HScroll>
          </NavBox>
          <NavFoot>相依性</NavFoot>
        </Nav>
      </Main>

      <Dialog>
        <DialogTitle>
          <svg width="16" height="16" viewBox="0 0 24 24">
            <path
              fillRule="evenodd"
              fill="#fff"
              d="M10 1h4l1 3 2 1 3-1 2 3-2 3v2l2 3-2 3-3-1-2 1-1 3h-4l-1-3-2-1-3 1-2-3 2-3v-2L2 7l2-3 3 1 2-1zM12 8a4 4 0 1 0 0 8 4 4 0 0 0 0-8z"
            />
          </svg>
          Jp - [JP]
          <CloseX width="12" height="12" viewBox="0 0 12 12">
            <path d="M1 1 11 11M11 1 1 11" stroke="#fff" strokeWidth="2" />
          </CloseX>
        </DialogTitle>
        <DialogBody>
          <Content>
            <ClippedRow>
              <Stub />
              <Stub />
            </ClippedRow>
            <Row $mb={2} $top>
              <Label $pt={3}>刀具</Label>
              <Combo $w={127} $h={23} $latin>
                <ComboText>E16R0.8-L90 (MIL</ComboText>
                <Drop />
              </Combo>
              <IconBtn><Icon n="newTool" /></IconBtn>
              <IconBtn><Icon n="wrench" /></IconBtn>
            </Row>
            <Divider $mb={3} />
            {btnRows.map(([t, n, dim]) => (
              <Row key={t}>
                <Label $pt={2}>{t}</Label>
                <IconBtn><Icon n={n} /></IconBtn>
                <IconBtn $dim={dim}><Icon n={dim ? "flashOff" : "flashOn"} /></IconBtn>
              </Row>
            ))}
            <Row $h={20} $mb={3}>
              <CheckBox />
              <Label>自动壁</Label>
            </Row>
            <Divider $mb={3} />
            <Row $h={25}>
              <Label>切削区域空间范围</Label>
              <Combo $w={152}><ComboText>底面</ComboText><Drop /></Combo>
            </Row>
            <Row $h={26}>
              <Label>切削模式</Label>
              <Combo $w={152}>
                <ComboText><Icon n="follow" s={16} />跟随部件</ComboText>
                <Drop />
              </Combo>
            </Row>
            <Row $h={25}>
              <Label>步距</Label>
              <Combo $w={152}><ComboText>刀具平直百分比</ComboText><Drop /></Combo>
            </Row>
            <Row $h={26}><Label>平面直径百分比</Label><NumInput>30.0000</NumInput></Row>
            <Row $h={26}><Label>底面毛坯厚度</Label><NumInput>0.1000</NumInput></Row>
            <Row $h={26}><Label>每刀切削深度</Label><NumInput>0.1000</NumInput></Row>
            <Row><Label>非切削移动</Label><IconBtn><Icon n="nonCut" /></IconBtn></Row>
            <Row $mb={2}><Label>切削参数</Label><IconBtn><Icon n="cutParam" /></IconBtn></Row>
            <Divider $mb={3} />
            <Row><Label>进给率和速度</Label><IconBtn><Icon n="feed" /></IconBtn></Row>
            <Row><Label>机床控制</Label><IconBtn><Icon n="machine" /></IconBtn></Row>
            <Row><Label>编辑显示</Label><IconBtn><Icon n="editDisp" /></IconBtn></Row>
            <Divider $mb={3} />
            <CenterRow>
              <IconBtn><Icon n="gen" /></IconBtn>
              <IconBtn><Icon n="replay" /></IconBtn>
              <IconBtn><Icon n="verify" /></IconBtn>
              <IconBtn><Icon n="list" /></IconBtn>
            </CenterRow>
          </Content>
          <VScroll>
            <ScrollBtn />
            <ScrollThumb />
          </VScroll>
        </DialogBody>
      </Dialog>

      <Annotation width="983" height="644" viewBox="0 0 983 644">
        <path d={RED} fill="none" stroke="#e4141f" strokeWidth="4" strokeLinejoin="round" strokeLinecap="round" />
        <path d="M207 193 218 187 231 188 216 191Z" fill="#e4141f" stroke="#e4141f" />
      </Annotation>
    </Page>
  );
}
